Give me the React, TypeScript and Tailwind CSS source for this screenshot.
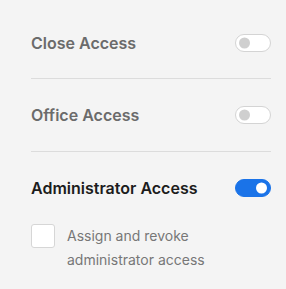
import React, { useState } from 'react';
import clsx from 'clsx';

const Toggle: React.FC<{ on: boolean; onChange: () => void }> = ({ on, onChange }) => (
  <button
    onClick={onChange}
    className={clsx(
      'relative w-[36px] h-[18px] rounded-full border transition-colors',
      on ? 'bg-[#1a73e8] border-[#1a73e8]' : 'bg-white border-[#d4d4d4]'
    )}
  >
    <span
      className={clsx(
        'absolute top-1/2 -translate-y-1/2 w-[11px] h-[11px] rounded-full',
        on ? 'right-[3px] bg-white' : 'left-[3px] bg-[#cfcfcf]'
      )}
    />
  </button>
);

export default function App() {
  const [close, setClose] = useState(false);
  const [office, setOffice] = useState(false);
  const [admin, setAdmin] = useState(true);
  const [assign, setAssign] = useState(false);

  return (
    <div className="w-[286px] h-[289px] bg-[#f4f4f4] pl-[31px] pr-[15px] pt-[7px] font-['Inter',sans-serif]">
      <div className="h-[72px] flex items-center justify-between border-b border-[#dcdcdc]">
        <span className="text-[16px] font-semibold text-[#6b6b6b]">Close Access</span>
        <Toggle on={close} onChange={() => setClose(!close)} />
      </div>
      <div className="h-[73px] flex items-center justify-between border-b border-[#dcdcdc]">
        <span className="text-[16px] font-semibold text-[#6b6b6b]">Office Access</span>
        <Toggle on={office} onChange={() => setOffice(!office)} />
      </div>
      <div className="h-[72px] flex items-center justify-between">
        <span className="text-[16px] font-semibold text-[#1c1c1c]">Administrator Access</span>
        <Toggle on={admin} onChange={() => setAdmin(!admin)} />
      </div>
      <label className="flex items-start gap-[12px]">
        <input
          type="checkbox"
          checked={assign}
          onChange={() => setAssign(!assign)}
          className="appearance-none w-[24px] h-[24px] shrink-0 rounded-[3px] border border-[#d6d6d6] bg-white"
        />
        <span className="text-[14px] leading-[24px] text-[#777777]">
          Assign and revoke
          <br />
          administrator access
        </span>
      </label>
    </div>
  );
}
